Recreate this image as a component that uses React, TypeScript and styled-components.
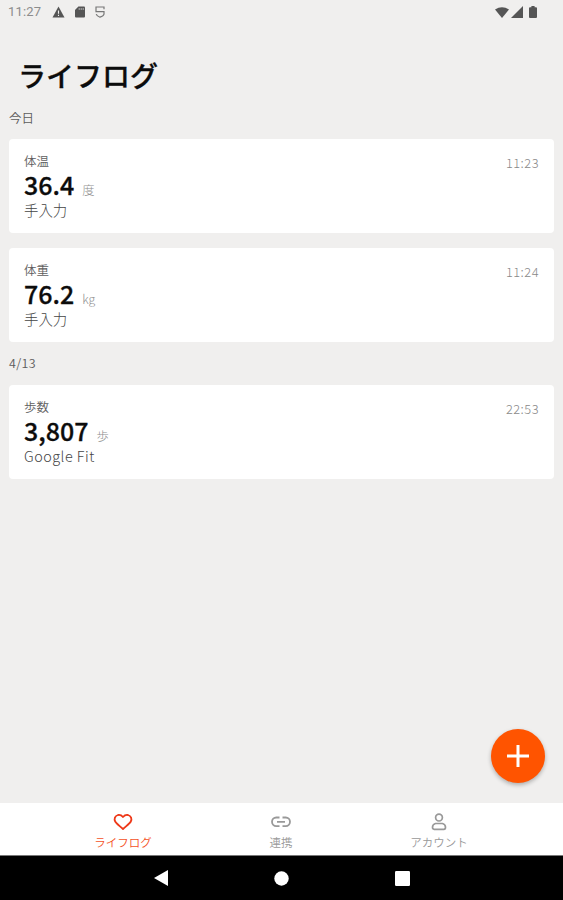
import React from "react";
import styled, { createGlobalStyle } from "styled-components";

const GlobalStyle = createGlobalStyle`
  * { box-sizing: border-box; }
  body { margin: 0; background: #f0efee; }
`;

const Screen = styled.div`
  width: 563px;
  height: 900px;
  display: flex;
  flex-direction: column;
  overflow: hidden;
  background: #f0efee;
  color: #111;
  font-family: "Noto Sans CJK JP", "Noto Sans", sans-serif;
`;

const StatusBar = styled.header`
  height: 24px;
  flex: none;
  display: flex;
  align-items: center;
  justify-content: space-between;
  padding: 0 26px 0 8px;
  color: #555;
`;

const StatusGroup = styled.div<{ $gap: number }>`
  display: flex;
  align-items: center;
  gap: ${(p) => p.$gap}px;
`;

const Clock = styled.span`
  width: 34px;
  font: 400 13px/24px Roboto, sans-serif;
  color: #8c8c8c;
  letter-spacing: 0.2px;
`;

const Main = styled.main`
  flex: 1;
  position: relative;
  padding: 30px 9px 0 9px;
`;

const Title = styled.h1`
  margin: 0 0 0 9px;
  font-size: 28px;
  line-height: 42px;
  font-weight: 500;
  -webkit-text-stroke: 0.3px currentColor;
  color: #0c0c0c;
`;

const DateLabel = styled.h2<{ $first?: boolean }>`
  margin: 0;
  height: 43px;
  font-size: 12.5px;
  line-height: ${(p) => (p.$first ? 43 : 42)}px;
  letter-spacing: ${(p) => (p.$first ? 0 : 0.4)}px;
  font-weight: 350;
  color: #5c5c5c;
`;

const CardList = styled.div`
  display: flex;
  flex-direction: column;
  gap: 15px;
`;

const Card = styled.article`
  height: 94px;
  display: flex;
  justify-content: space-between;
  padding: 13px 15px 0;
  background: #fff;
  border-radius: 4px;
`;

const Name = styled.div`
  font-size: 12.5px;
  line-height: 17px;
  font-weight: 350;
  color: #5e5e5e;
`;

const Value = styled.div`
  display: flex;
  align-items: baseline;
  gap: 8px;
  height: 31px;
  font-size: 25px;
  line-height: 31px;
  font-weight: 500;
  color: #0c0c0c;
`;

const Amount = styled.span`
  -webkit-text-stroke: 0.3px currentColor;
`;

const Unit = styled.span`
  font-size: 12.3px;
  font-weight: 300;
  color: #8f8f8f;
`;

const Source = styled.div<{ $latin?: boolean }>`
  font-size: 14.4px;
  line-height: 20px;
  font-weight: 300;
  letter-spacing: ${(p) => (p.$latin ? 0.5 : 0)}px;
  color: #444;
`;

const Time = styled.time`
  font-size: 12.8px;
  line-height: 21px;
  font-weight: 300;
  letter-spacing: 0.5px;
  color: #888;
`;

const AddButton = styled.button`
  position: absolute;
  right: 18px;
  bottom: 20px;
  width: 54px;
  height: 54px;
  display: grid;
  place-items: center;
  padding: 0;
  border: 0;
  border-radius: 50%;
  background: #ff5400;
  box-shadow: 0 2px 4px rgba(0, 0, 0, 0.28);
`;

const TabBar = styled.nav`
  flex: none;
  height: 52px;
  display: flex;
  justify-content: center;
  padding-right: 1px;
  background: #fff;
`;

const Tab = styled.a<{ $active?: boolean }>`
  width: 158px;
  display: flex;
  flex-direction: column;
  align-items: center;
  padding-top: 9px;
  font-size: 11.5px;
  line-height: 20px;
  font-weight: 350;
  color: ${(p) => (p.$active ? "#f4511e" : "#999")};
  svg { display: block; }
`;

const SystemBar = styled.footer`
  flex: none;
  height: 45px;
  display: flex;
  justify-content: center;
  align-items: center;
  border-top: 1px solid #777;
  background: #000;
`;

const SystemKey = styled.div`
  width: 120.5px;
  display: flex;
  justify-content: center;
`;

interface Entry {
  name: string;
  value: string;
  unit: string;
  source: string;
  time: string;
  latin?: boolean;
}

const today: Entry[] = [
  { name: "体温", value: "36.4", unit: "度", source: "手入力", time: "11:23" },
  { name: "体重", value: "76.2", unit: "kg", source: "手入力", time: "11:24" },
];

const earlier: Entry[] = [
  { name: "歩数", value: "3,807", unit: "歩", source: "Google Fit", time: "22:53", latin: true },
];

function Entries({ items }: { items: Entry[] }) {
  return (
    <CardList>
      {items.map((e) => (
        <Card key={e.name}>
          <div>
            <Name>{e.name}</Name>
            <Value>
              <Amount>{e.value}</Amount>
              <Unit>{e.unit}</Unit>
            </Value>
            <Source $latin={e.latin}>{e.source}</Source>
          </div>
          <Time>{e.time}</Time>
        </Card>
      ))}
    </CardList>
  );
}

const WarningIcon = () => (
  <svg width="13" height="12" viewBox="0 0 13 12">
    <path d="M6.5.5 12.5 11.5H.5Z" fill="currentColor" />
    <path d="M6.5 4.5v3.2M6.5 8.7v1.4" stroke="#f0efee" strokeWidth="1.1" />
  </svg>
);

const SdCardIcon = () => (
  <svg width="10" height="12" viewBox="0 0 10 12">
    <path d="M3.4.5H9q1 0 1 1v9q0 1-1 1H1q-1 0-1-1V4Z" fill="currentColor" />
    <path d="M4.2 2v2M6.2 2v2M8.2 2v2" stroke="#bbb" strokeWidth=".9" />
  </svg>
);

const ShieldIcon = () => (
  <svg width="10" height="12" viewBox="0 0 10 12" fill="none" stroke="#777" strokeWidth="1.2">
    <path d="M9 3.2V1H1v4.6h8v2.6Q8.6 10.2 5 11.2 1.8 10.2 1.2 8.2" />
  </svg>
);

const WifiIcon = () => (
  <svg width="14" height="11" viewBox="0 0 14 11">
    <path d="M0 2.6Q7-2 14 2.6L7 11Z" fill="currentColor" />
  </svg>
);

const SignalIcon = () => (
  <svg width="12" height="12" viewBox="0 0 12 12">
    <path d="M12 0v12H0Z" fill="currentColor" />
  </svg>
);

const BatteryIcon = () => (
  <svg width="8" height="12" viewBox="0 0 8 12">
    <path d="M2.4 0h3.2v1.2H7q1 0 1 1V11q0 1-1 1H1q-1 0-1-1V2.2q0-1 1-1h1.4Z" fill="currentColor" />
  </svg>
);

const HeartIcon = () => (
  <svg width="20" height="20" viewBox="0 0 20 20" fill="none" stroke="#ee3818" strokeWidth="1.8" strokeLinejoin="round">
    <path d="M10 5Q7.8 2.4 5 3C1.8 3.8.9 7.1 2.2 9.5 3.2 11.4 6.5 13.8 10 17c3.5-3.2 6.8-5.6 7.8-7.5C19.1 7.1 18.2 3.8 15 3q-2.8-.6-5 2Z" />
  </svg>
);

const LinkIcon = () => (
  <svg width="20" height="20" viewBox="0 0 20 20" fill="none" stroke="currentColor" strokeWidth="1.8">
    <path d="M8.5 5.5H5.3a4.3 4.3 0 0 0 0 8.6h3.2M11.5 5.5h3.2a4.3 4.3 0 0 1 0 8.6h-3.2M6 9.8h8" />
  </svg>
);

const PersonIcon = () => (
  <svg width="20" height="20" viewBox="0 0 20 20" fill="none" stroke="currentColor" strokeWidth="1.7">
    <circle cx="10" cy="5.6" r="3.4" />
    <path d="M6.5 11.5h7q3 .8 3 3.8 0 2-1.6 2H5.1q-1.6 0-1.6-2 0-3 3-3.8Z" />
  </svg>
);

export default function App() {
  return (
    <>
      <GlobalStyle />
      <Screen>
        <StatusBar>
          <StatusGroup $gap={10}>
            <Clock>11:27</Clock>
            <WarningIcon />
            <SdCardIcon />
            <ShieldIcon />
          </StatusGroup>
          <StatusGroup $gap={2}>
            <WifiIcon />
            <SignalIcon />
            <svg width="2" height="12" />
            <BatteryIcon />
          </StatusGroup>
        </StatusBar>
        <Main>
          <Title>ライフログ</Title>
          <DateLabel $first>今日</DateLabel>
          <Entries items={today} />
          <DateLabel>4/13</DateLabel>
          <Entries items={earlier} />
          <AddButton aria-label="追加">
            <svg width="24" height="24" viewBox="0 0 24 24" stroke="#fff" strokeWidth="3">
              <path d="M12 1v22M1 12h22" />
            </svg>
          </AddButton>
        </Main>
        <TabBar>
          <Tab $active>
            <HeartIcon />
            ライフログ
          </Tab>
          <Tab>
            <LinkIcon />
            連携
          </Tab>
          <Tab>
            <PersonIcon />
            アカウント
          </Tab>
        </TabBar>
        <SystemBar>
          <SystemKey>
            <svg width="14" height="16" viewBox="0 0 14 16">
              <path d="M14 0v16L0 8Z" fill="#fff" />
            </svg>
          </SystemKey>
          <SystemKey>
            <svg width="15" height="15" viewBox="0 0 15 15">
              <circle cx="7.5" cy="7.5" r="7.2" fill="#fff" />
            </svg>
          </SystemKey>
          <SystemKey>
            <svg width="15" height="15" viewBox="0 0 15 15">
              <rect width="15" height="15" rx="1.2" fill="#fff" />
            </svg>
          </SystemKey>
        </SystemBar>
      </Screen>
    </>
  );
}
